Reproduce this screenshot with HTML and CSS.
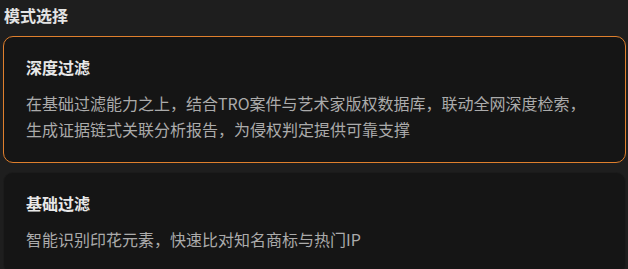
FILE: index.html
```html
<!DOCTYPE html>
<html lang="zh-CN">
<head>
<meta charset="utf-8">
<title>模式选择</title>
<link rel="stylesheet" href="styles.css">
</head>
<body>
<div class="panel">
  <div class="panel-title">模式选择</div>
  <div class="mode-list">
    <div class="mode-card is-selected">
      <div class="mode-name">深度过滤</div>
      <div class="mode-desc">在基础过滤能力之上，结合TRO案件与艺术家版权数据库，联动全网深度检索，生成证据链式关联分析报告，为侵权判定提供可靠支撑</div>
    </div>
    <div class="mode-card">
      <div class="mode-name">基础过滤</div>
      <div class="mode-desc">智能识别印花元素，快速比对知名商标与热门IP</div>
    </div>
  </div>
</div>
</body>
</html>
```

FILE: styles.css
```css
html, body {
  margin: 0;
  padding: 0;
  background: #1e1e1e;
}
body {
  font-family: "Noto Sans CJK SC", "Noto Sans", "Liberation Sans", sans-serif;
  color: #e6e6e6;
  overflow: hidden;
}
.panel {
  padding: 3px 2px 0 3px;
}
.panel-title {
  font-size: 16px;
  font-weight: 700;
  line-height: 24px;
  color: #e4e4e4;
  padding-left: 1px;
  margin-bottom: 11px;
}
.mode-list {
  display: flex;
  flex-direction: column;
  gap: 7px;
}
.mode-card {
  background: #151515;
  border: 1px solid #1b1b1b;
  border-radius: 10px;
  padding: 18px 30px 20px 22px;
}
.mode-card.is-selected {
  border-color: #df7f2d;
  transform: translateY(-2px);
}
.mode-name {
  font-size: 16px;
  font-weight: 700;
  line-height: 24px;
  color: #e8e8e8;
  margin-bottom: 12px;
}
.mode-desc {
  font-size: 16px;
  line-height: 1.6;
  color: #ababab;
}
```
